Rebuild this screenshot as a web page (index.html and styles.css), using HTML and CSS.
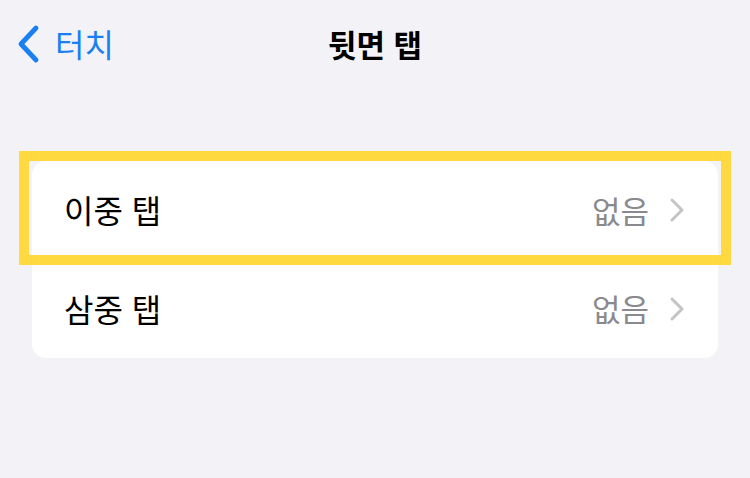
FILE: index.html
```html
<!DOCTYPE html>
<html lang="ko">
<head>
<meta charset="utf-8">
<link rel="stylesheet" href="styles.css">
</head>
<body>
<header class="nav">
  <div class="back">
    <svg class="back-icon" width="26" height="40" viewBox="0 0 26 40"><path d="M21 4 L6 20 L21 36" fill="none" stroke="#1a7ff2" stroke-width="4.8" stroke-linecap="round" stroke-linejoin="round"/></svg>
    <span class="back-label">터치</span>
  </div>
  <h1 class="title">뒷면 탭</h1>
  <div></div>
</header>
<main class="content">
  <section class="card">
    <div class="row">
      <span class="label">이중 탭</span>
      <span class="value">없음</span>
      <svg class="chev" width="16" height="26" viewBox="0 0 16 26"><path d="M3 3 L13 13 L3 23" fill="none" stroke="#c4c4c7" stroke-width="3" stroke-linecap="round" stroke-linejoin="round"/></svg>
    </div>
    <div class="row">
      <span class="label">삼중 탭</span>
      <span class="value">없음</span>
      <svg class="chev" width="16" height="26" viewBox="0 0 16 26"><path d="M3 3 L13 13 L3 23" fill="none" stroke="#c4c4c7" stroke-width="3" stroke-linecap="round" stroke-linejoin="round"/></svg>
    </div>
    <div class="highlight"></div>
  </section>
</main>
</body>
</html>
```
FILE: styles.css
```css
html, body {
  margin: 0;
  padding: 0;
}
body {
  width: 750px;
  height: 478px;
  background: #f2f2f7;
  font-family: "Noto Sans CJK KR", "Noto Sans", sans-serif;
  overflow: hidden;
}
.nav {
  height: 88px;
  display: grid;
  grid-template-columns: 1fr auto 1fr;
  align-items: center;
}
.back {
  display: flex;
  align-items: center;
  padding-left: 15px;
  gap: 14px;
  color: #1a7ff2;
}
.back-icon {
  display: block;
}
.back-label {
  font-size: 32px;
  line-height: 1;
  margin-top: -2px;
}
.title {
  margin: 0;
  font-size: 31px;
  font-weight: 700;
  color: #000;
  line-height: 1;
  margin-top: -2px;
}
.content {
  padding: 73px 32px 0 32px;
}
.card {
  position: relative;
  background: #fff;
  border-radius: 14px;
  width: 686px;
}
.row {
  height: 98.5px;
  display: flex;
  align-items: center;
  padding: 0 33px 0 32px;
}
.label {
  flex: 1;
  font-size: 32px;
  color: #000;
  line-height: 1;
  margin-top: -2px;
}
.value {
  font-size: 31px;
  color: #8a8a8e;
  line-height: 1;
  margin-top: -2px;
  margin-right: 20px;
}
.chev {
  display: block;
}
.highlight {
  position: absolute;
  left: -13px;
  right: -13px;
  top: -10px;
  height: 114px;
  border: 10px solid #ffd93f;
  box-sizing: border-box;
}
```
